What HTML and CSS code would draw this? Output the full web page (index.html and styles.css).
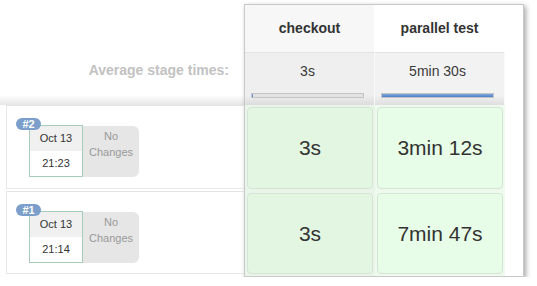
FILE: index.html
```html
<!DOCTYPE html>
<html>
<head>
<meta charset="utf-8">
<link rel="stylesheet" href="styles.css">
</head>
<body>
<div class="view">
  <div class="left">
    <div class="left-head">
      <div class="avg-label">Average stage times:</div>
    </div>
    <div class="runs">
      <div class="run">
        <span class="badge">#2</span>
        <div class="start">
          <div class="date">Oct 13</div>
          <div class="time">21:23</div>
        </div>
        <div class="changes">No<br>Changes</div>
      </div>
      <div class="run">
        <span class="badge">#1</span>
        <div class="start">
          <div class="date">Oct 13</div>
          <div class="time">21:14</div>
        </div>
        <div class="changes">No<br>Changes</div>
      </div>
    </div>
  </div>
  <div class="stages">
    <div class="col odd">
      <div class="head">checkout</div>
      <div class="avg">
        <div class="avg-time">3s</div>
        <div class="bar"><div class="fill" style="width:1%"></div></div>
      </div>
      <div class="cell-wrap r1"><div class="cell">3s</div></div>
      <div class="cell-wrap r2"><div class="cell">3s</div></div>
    </div>
    <div class="col even">
      <div class="head">parallel test</div>
      <div class="avg">
        <div class="avg-time">5min 30s</div>
        <div class="bar"><div class="fill" style="width:100%"></div></div>
      </div>
      <div class="cell-wrap r1"><div class="cell">3min 12s</div></div>
      <div class="cell-wrap r2"><div class="cell">7min 47s</div></div>
    </div>
    <div class="spacer"></div>
  </div>
</div>
</body>
</html>
```

FILE: styles.css
```css
html, body {
  margin: 0;
  padding: 0;
  background: #fff;
  font-family: "Liberation Sans", Arial, sans-serif;
  color: #333;
}

.view {
  display: flex;
  align-items: flex-start;
}

.left {
  width: 244px;
  flex: none;
}

.left-head {
  height: 105px;
  box-sizing: border-box;
  padding-top: 62px;
  background: linear-gradient(to bottom, #fff 0, #fff 95px, #e6e6e6 105px);
}

.avg-label {
  text-align: right;
  padding-right: 15px;
  font-size: 14px;
  font-weight: bold;
  color: #c2c2c2;
  line-height: 16px;
}

.runs {
  display: flex;
  flex-direction: column;
  gap: 2px;
}

.run {
  position: relative;
  margin-left: 6px;
  height: 84px;
  box-sizing: border-box;
  border: 1px solid #e8e8e8;
  border-right: none;
  border-top-color: #e2e2e2;
  display: flex;
  align-items: flex-start;
  padding: 19px 0 0 22px;
}

.run + .run {
  height: 83px;
}

.badge {
  position: absolute;
  left: 9px;
  top: 12px;
  width: 25px;
  height: 12px;
  border-radius: 6px;
  background: #7b9fca;
  color: #fff;
  font-size: 11px;
  font-weight: bold;
  line-height: 12px;
  text-align: center;
  z-index: 2;
}

.start {
  width: 54px;
  height: 52px;
  box-sizing: border-box;
  border: 1px solid #a6cdb9;
  font-size: 11px;
  text-align: center;
  background: #fff;
  flex: none;
}

.date {
  height: 25px;
  line-height: 25px;
  background: #f0f0f0;
}

.time {
  height: 25px;
  line-height: 25px;
}

.changes {
  width: 56px;
  height: 51px;
  margin-top: 1px;
  box-sizing: border-box;
  background: #e6e6e6;
  border-radius: 0 6px 6px 0;
  color: #999;
  font-size: 11px;
  line-height: 16px;
  text-align: center;
  padding-top: 2px;
  flex: none;
}

.stages {
  margin-top: 4px;
  display: flex;
  border: 1px solid #c9c9c9;
  box-shadow: 2px 2px 5px rgba(0, 0, 0, 0.35);
  background: #fff;
  flex: none;
}

.col {
  width: 130px;
  display: flex;
  flex-direction: column;
}

.head {
  height: 48px;
  box-sizing: border-box;
  border-bottom: 1px solid #e2e2e2;
  border-right: 1px solid #fff;
  display: flex;
  align-items: center;
  justify-content: center;
  font-size: 14px;
  font-weight: bold;
  color: #333;
  padding-bottom: 1px;
}

.odd .head {
  background: #f7f7f7;
}

.even .head {
  background: #fff;
}

.avg {
  height: 52px;
  box-sizing: border-box;
  border-right: 1px solid #fafafa;
  padding: 10px 0 0 6px;
  background: linear-gradient(to bottom, #efefef 0, #efefef 42px, #dcdcdc 52px);
}

.even .avg {
  background: linear-gradient(to bottom, #f2f2f2 0, #f2f2f2 42px, #dedede 52px);
}

.avg-time {
  width: 113px;
  text-align: center;
  font-size: 14px;
  line-height: 16px;
  color: #3a3a3a;
}

.bar {
  margin-top: 14px;
  width: 113px;
  height: 5px;
  box-sizing: border-box;
  border: 1px solid #c4c4c4;
  background: #e2e2e2;
}

.fill {
  height: 100%;
  background: linear-gradient(to bottom, #80a8dc, #4a7fc8);
}

.cell-wrap {
  box-sizing: border-box;
  padding: 2px 2px 2px 2px;
}

.odd .cell-wrap {
  background: #eaf5ea;
}

.even .cell-wrap {
  background: #eefaee;
}

.r1 {
  height: 86px;
}

.r2 {
  height: 85px;
}

.cell {
  height: 100%;
  box-sizing: border-box;
  border: 1px solid #d6e4d6;
  border-radius: 4px;
  display: flex;
  align-items: center;
  justify-content: center;
  font-size: 21px;
  color: #333;
}

.odd .cell {
  background: #e2f6e2;
}

.even .cell {
  background: #e7fde7;
}

.spacer {
  width: 18px;
  background: #fff;
}
```
